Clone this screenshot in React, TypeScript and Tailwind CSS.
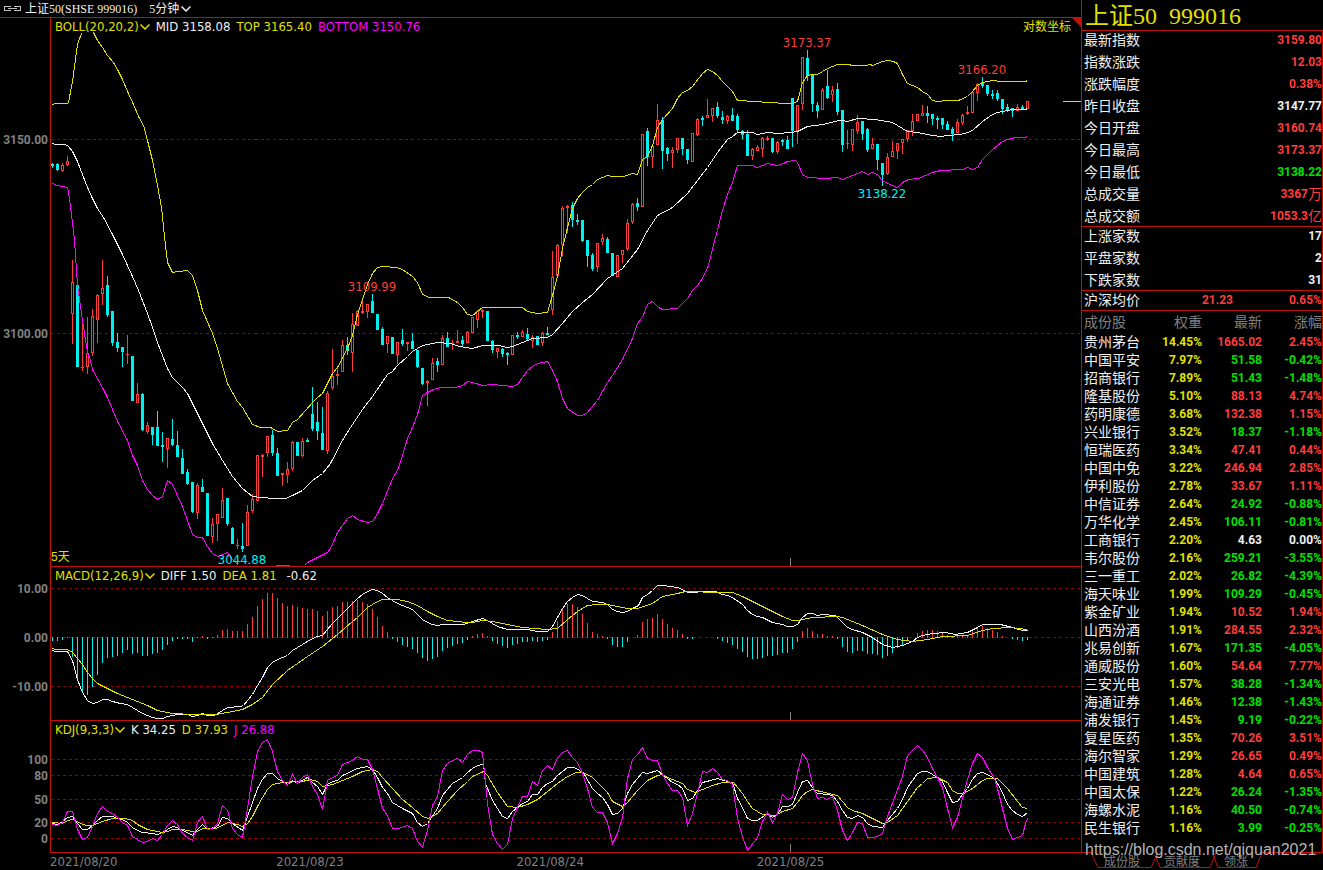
import type { ReactNode } from "react";

type Point = { label: string; y: number };

// u = up, d = down, then high, body top, body bottom, low
const candles = `
d163,164,166,168 d163,164,170,171 u163,165,171,172 u156,161,165,166 u260,282,314,344 d285,285,367,367 u318,367,368,371 u317,353,367,374
u309,316,353,356 u294,295,320,343 u260,288,294,305 d276,285,315,317 d311,311,343,346 d333,342,348,352 d347,347,352,367 u335,354,355,364
d356,356,401,401 u383,394,403,403 d393,394,430,431 u422,425,432,434 d427,427,435,445 d411,427,446,446 d432,445,447,462 u438,438,449,468
d419,439,445,446 d431,445,457,457 d449,458,474,474 d469,472,484,485 d482,482,512,513 u483,485,513,519 d479,487,492,492 d493,493,536,536
u518,524,537,543 u514,514,524,541 u488,500,518,518 d498,498,524,526 d527,528,544,544 u539,545,546,549 d523,546,549,552 u505,512,546,546
u494,499,511,513 u455,455,501,501 u454,455,457,477 u436,436,453,457 d430,435,453,456 d448,453,476,476 u473,473,475,486 u462,469,475,483
u441,442,469,471 d442,442,456,456 u438,441,456,457 d438,440,442,442 d387,414,429,431 d402,422,431,440 d407,433,450,450 u391,393,451,454
u349,376,388,390 u368,374,376,385 u340,345,372,372 d337,345,351,355 u313,324,353,372 u310,311,326,326 u299,311,313,314 u304,304,312,318
d294,301,313,313 d314,314,330,330 d327,329,345,345 u336,336,344,353 d337,337,354,354 u342,342,355,364 d329,340,344,346 u342,342,344,351
d333,341,349,349 d350,350,367,368 d368,368,384,385 u380,381,383,406 u358,363,380,380 d358,361,365,372 u335,338,365,365 d332,338,347,347
u340,343,344,350 u330,341,343,343 d336,340,344,346 u331,332,343,343 u317,317,333,333 u310,311,320,328 u309,310,312,318 d311,311,341,341
d340,341,350,353 u348,348,352,358 d348,349,354,357 d352,353,355,365 u335,335,355,355 d332,335,337,339 u330,332,337,337 d328,334,339,341
u335,337,341,348 d336,336,345,345 u332,333,343,346 d327,333,335,335 u251,277,310,315 u244,245,276,276 u206,208,245,256 u205,206,208,233
d202,205,220,227 d214,220,222,225 d220,220,241,242 d240,240,256,267 d253,255,269,271 u243,243,267,272 u234,238,242,245 d237,239,253,253
d253,253,276,276 u255,255,277,277 u250,250,255,263 u219,223,249,251 u203,204,222,224 d198,203,207,211 u134,134,207,207 d128,131,157,166
u145,146,157,168 u104,120,145,145 d117,120,151,169 d147,148,154,161 u147,150,153,168 u138,138,150,153 d138,138,149,155 d149,149,160,164
u133,133,162,162 u118,119,135,136 d116,118,120,126 u99,115,118,118 u108,108,116,122 d102,107,116,118 d111,117,120,124 u115,116,121,124
d108,115,121,121 d114,116,130,132 d130,131,135,139 d130,134,156,156 u148,149,156,160 u145,147,151,151 u137,138,149,157 u136,138,140,141
d138,138,152,153 u141,142,152,154 d139,140,142,146 d136,140,149,149 d98,98,131,147 u105,105,131,144 u57,57,104,110 d50,58,76,81
d75,75,104,112 d102,105,111,118 u88,90,110,110 d70,86,98,99 u86,90,95,102 d83,89,112,115 d110,110,145,152 u130,143,144,149
u129,129,145,151 u115,122,131,134 d121,121,134,140 d128,129,150,152 u138,144,149,149 d144,144,160,170 d163,163,175,186 u153,157,174,175
u141,151,157,157 u143,143,151,159 u139,139,143,154 u130,130,139,142 u114,121,131,136 u114,114,121,121 u105,113,116,116 d106,113,116,123
d114,114,119,125 d116,118,120,129 d118,118,125,129 d121,124,130,130 d127,129,134,141 u119,122,133,133 u114,115,123,125 u106,112,114,115
u91,92,113,113 u83,84,93,101 d77,82,86,88 d85,85,94,96 d90,94,96,99 d90,93,99,101 d99,99,109,114 d104,107,110,112
d108,108,111,117 u104,107,111,111 d105,107,110,110 u101,101,109,109`
  .trim()
  .split(/\s+/)
  .map((c) => {
    const [high, top, bottom, low] = c.slice(1).split(",").map(Number);
    return { up: c[0] === "u", high, top, bottom, low };
  });

// histogram bars, pixels above (+) or below (-) the zero line
const macdBars = [
  -4, -4, -3, -1, -20, -43, -56, -58, -50, -38, -26, -21, -20, -19, -16, -13, -17, -16, -19, -19,
  -17, -16, -13, -8, -4, -2, -2, -2, -5, -1, 1, -2, -1, 2, 7, 8, 6, 6, 6, 13,
  20, 31, 38, 44, 44, 39, 34, 31, 32, 30, 29, 28, 28, 26, 21, 26, 30, 31, 35, 35,
  36, 37, 35, 33, 28, 20, 11, 5, -2, -5, -8, -10, -12, -16, -21, -24, -22, -20, -14, -11,
  -9, -7, -6, -3, 1, 3, 4, 1, -4, -7, -9, -11, -8, -7, -5, -5, -4, -5, -4, -3,
  5, 16, 28, 33, 33, 30, 23, 14, 5, 3, 1, -2, -8, -10, -10, -5, 0, 2, 15, 18,
  19, 23, 18, 13, 9, 7, 3, -2, -2, 0, 0, 0, 0, -2, -4, -6, -8, -12, -15, -20,
  -22, -22, -21, -19, -19, -18, -16, -16, -12, -5, 6, 9, 6, 3, 3, 1, 1, -2, -10, -15,
  -16, -14, -14, -17, -17, -18, -21, -19, -16, -11, -8, -3, 0, 4, 6, 7, 7, 6, 4, 2,
  1, 1, 1, 2, 7, 9, 11, 9, 7, 5, 1, 0, -2, -3, -4, -3,
];

const bollTop = [
  "52,104 55,103 67,103 68,102 72,81 77,44 81,33",
  "93,32 97,40 102,47 107,55 113,62 117,69 122,79 127,91 133,104 138,116 143,125 147,140 152,160 157,185 161,207 164,236 167,262 172,272 178,271 187,270 192,275 197,290 202,310 212,333 217,348 227,383 237,401 242,407 252,424 260,427 270,427 277,431 287,430 292,422 297,419 312,402 317,397 322,393 332,373 337,367 347,348 352,335 357,314 362,299 367,284 372,273 377,267 382,266 396,267 402,269 412,276 417,282 422,294 429,297 448,297 457,302 462,307 467,314 472,315 482,307 498,307 508,307 522,307 527,311 537,313 547,312 552,295 557,276 562,248 567,227 572,208 577,198 582,192 587,187 592,184 597,179 602,177 607,175 612,176 623,176 632,173 637,174 642,159 647,156 652,145 657,127 662,119 672,108 677,98 682,92 687,90 692,86 702,73 707,69 712,71 717,75 722,81 727,86 732,91 737,100 755,101 767,102 787,103 792,103 797,101 802,82 807,75 812,74 817,74 822,71 827,68 837,64 847,64 853,65 865,65 870,64 872,65 882,61 887,60 893,61 897,63 902,74 907,83 912,85 917,87 922,91 927,94 932,100 937,101 947,100 958,100 967,96 972,91 977,85 982,82 992,80 1000,81 1025,81 1027,80",
];
const bollMid =
  "52,143 55,144 65,144 68,146 72,151 77,161 82,174 87,187 92,198 97,208 103,217 112,234 122,254 132,276 138,290 147,313 152,327 157,342 162,355 167,368 172,377 182,387 187,393 192,403 202,423 212,443 222,460 232,476 242,488 252,496 260,497 274,498 285,498 292,495 302,490 312,480 322,473 330,463 343,438 352,424 362,409 372,396 387,374 392,371 397,365 407,356 412,351 422,345 437,342 450,343 459,346 472,348 482,345 498,345 507,347 512,346 522,342 532,338 547,337 552,334 562,323 572,311 582,302 592,294 607,278 622,268 637,249 647,230 657,215 672,207 687,193 707,167 717,152 727,139 732,136 737,132 752,132 757,134 767,132 777,133 790,132 797,131 807,126 823,124 838,120 842,120 847,121 857,118 875,119 880,120 892,122 897,125 907,131 917,132 932,135 940,136 947,135 960,134 967,132 972,130 982,121 992,114 997,112 1007,110 1013,109 1025,109 1027,108";
const bollBottom = [
  "52,183 57,185 67,187 69,198 72,222 74,240 77,285 82,320 87,352 90,360 92,369 102,387 107,397 117,421 127,440 132,455 137,465 142,480 147,489 152,495 157,499 162,496 167,480 172,484 182,506 192,534 197,537 202,537 207,546 212,553 217,556 222,554 227,552 232,559 238,565",
  "275,565 289,565",
  "304,565 307,562 317,557 327,552 330,548 337,532 347,518 352,515 357,519 367,522 372,521 377,513 382,503 392,478 397,470 402,455 407,438 412,427 417,414 422,395 427,392 433,389 440,387 455,387 462,385 467,381 472,382 482,385 492,384 512,386 517,384 527,370 532,366 537,363 547,361 552,370 557,381 562,398 567,408 577,415 582,415 587,412 597,400 607,382 612,375 622,359 632,338 637,323 642,317 647,304 652,301 658,307 662,309 677,308 687,298 692,290 697,285 702,278 708,265 712,248 717,230 722,210 727,194 732,182 737,165 752,165 757,167 767,163 777,165 783,163 787,161 795,160 797,162 802,174 807,177 825,178 837,177 842,179 852,175 862,171 867,174 872,172 877,174 882,180 887,183 897,187 902,182 908,179 918,178 932,172 940,170 962,169 967,167 972,169 977,167 982,159 992,149 1002,141 1007,139 1015,137 1024,137 1027,136",
];
const diffLine =
  "52,650 55,651 67,651 72,660 77,679 82,692 87,700 92,703 97,702 102,699 107,699 112,701 120,703 127,704 132,707 137,710 142,713 147,715 152,717 157,718 162,718 167,716 177,714 187,714 192,716 197,715 202,713 207,715 214,715 222,710 227,707 240,706 243,705 247,700 252,694 257,685 262,677 267,667 272,662 277,659 287,655 292,650 302,644 312,638 317,636 322,635 332,623 337,618 347,608 352,603 357,598 362,594 367,591 372,589 377,590 382,593 387,597 397,603 407,607 412,609 417,614 422,619 427,622 432,624 437,625 443,624 463,624 472,621 482,618 487,620 497,626 507,629 527,629 537,631 547,631 552,626 557,617 562,608 567,601 572,597 577,594 582,595 587,598 592,601 602,602 607,604 612,609 617,611 622,612 627,611 632,608 638,605 642,597 647,594 652,590 657,585 662,585 670,586 677,587 682,589 687,592 695,592 700,591 715,591 722,594 727,595 732,597 742,604 747,610 752,614 757,616 762,617 772,622 782,624 787,626 792,626 797,624 802,617 807,613 812,613 817,615 822,614 835,615 842,622 847,627 852,629 862,632 872,637 882,644 892,647 902,645 912,641 917,637 922,635 932,633 945,632 955,634 967,632 977,627 982,624 1000,624 1012,627 1022,630 1027,630";
const deaLine =
  "52,648 55,649 67,649 72,652 77,658 82,664 87,672 92,678 97,683 107,688 117,693 132,699 147,705 157,710 172,713 192,714 215,714 227,712 242,709 252,704 262,697 272,684 287,670 307,656 322,646 337,634 352,621 357,617 362,612 367,607 377,601 382,599 397,599 407,601 417,605 427,611 437,616 447,620 457,621 465,622 472,622 482,620 492,621 507,624 522,627 547,629 557,628 567,619 577,611 587,605 597,604 607,604 617,606 627,608 637,608 652,603 662,596 677,593 685,591 720,592 732,592 742,596 762,606 782,616 792,620 797,620 812,617 837,616 842,617 862,625 882,634 897,639 912,641 927,639 942,636 967,635 982,630 992,628 1010,627 1027,629";
const kLine =
  "52,823 57,824 62,821 67,817 72,816 77,823 82,829 87,829 92,825 97,820 102,816 112,816 117,818 122,819 127,822 132,827 137,830 142,832 152,833 157,834 162,832 167,829 172,826 177,827 182,830 187,832 192,835 197,829 202,824 207,829 217,826 222,817 227,818 232,823 242,830 247,816 252,802 257,788 262,779 267,773 272,773 277,778 287,784 292,780 297,783 307,777 312,782 317,786 322,794 327,784 332,781 337,780 342,775 357,768 367,766 372,769 377,777 382,787 387,793 392,802 402,808 412,813 417,822 422,826 427,823 431,817 437,808 442,795 447,789 452,783 462,777 467,772 472,768 477,765 483,764 485,783 492,800 497,808 502,816 507,818 512,811 517,807 522,803 527,801 532,794 537,794 542,787 547,783 552,781 557,775 567,767 574,767 579,770 584,774 592,788 597,793 602,797 607,804 612,814 617,813 622,808 627,793 632,784 637,778 642,772 647,773 657,770 662,774 672,782 677,784 682,788 687,800 692,798 697,790 702,782 710,780 717,778 727,781 732,782 737,798 742,807 747,818 752,820 757,820 767,813 772,817 777,814 782,806 787,806 792,804 797,792 802,781 807,780 812,787 817,793 827,794 832,795 837,801 842,810 847,817 852,818 857,815 862,817 867,823 872,826 882,827 887,820 897,808 902,799 907,787 917,773 922,771 927,771 937,777 942,781 947,792 952,802 957,801 962,794 967,788 972,779 977,773 982,772 987,774 994,778 1001,790 1007,804 1012,810 1017,814 1022,816 1027,812";
const dLine =
  "52,822 62,823 67,820 72,819 77,821 82,824 87,825 92,825 102,821 112,818 125,818 132,820 137,824 147,829 157,831 162,832 167,831 172,829 182,829 192,831 197,831 202,828 215,828 222,825 227,822 237,824 242,826 247,823 252,816 257,806 262,797 267,789 272,784 282,782 302,781 310,779 317,781 322,786 332,784 342,780 352,776 362,771 372,769 377,771 382,777 392,788 402,799 412,807 422,816 428,818 437,813 447,801 457,790 467,781 472,776 483,771 487,775 497,792 507,806 517,807 527,804 537,799 547,791 557,783 567,776 576,772 582,772 587,774 592,777 607,792 612,801 622,806 627,802 637,790 647,780 657,775 662,774 667,777 682,783 687,789 695,792 702,789 712,785 722,782 733,782 737,787 742,793 747,801 752,808 757,811 762,814 775,815 782,811 792,808 797,802 802,795 807,791 812,789 820,791 837,795 847,807 852,810 862,813 882,823 887,822 897,815 907,801 917,787 922,783 927,778 937,777 947,782 952,790 957,793 963,793 972,788 982,780 987,778 997,778 1007,788 1017,801 1022,807 1027,808";
const jLine =
  "52,824 57,825 62,822 67,811 72,811 77,829 82,839 87,837 92,826 97,813 102,806 107,811 112,813 117,817 122,822 127,825 132,836 137,839 142,842 147,841 152,838 157,840 162,834 167,825 172,820 177,824 182,833 187,837 192,840 197,822 202,816 207,829 212,828 217,823 222,805 227,810 232,828 237,834 242,837 247,808 252,776 257,751 262,742 267,739 272,751 277,771 282,780 287,785 292,774 297,783 302,777 307,774 312,786 317,794 322,809 327,780 332,777 337,775 342,764 347,762 352,760 357,756 362,759 367,759 372,769 377,788 382,808 387,815 392,828 398,828 407,825 412,828 417,841 422,847 427,830 432,805 437,796 442,770 447,763 452,760 457,758 462,762 467,754 472,750 478,750 482,752 487,803 492,834 497,843 502,849 507,844 512,818 517,807 522,796 527,796 532,781 537,785 542,770 547,765 552,769 557,757 562,752 567,750 572,757 577,762 582,773 587,788 592,807 597,812 602,812 607,822 612,843 617,833 622,817 627,778 632,759 637,754 642,747 647,758 652,760 657,760 662,774 667,783 672,790 677,790 682,797 687,825 692,813 697,793 702,771 707,772 712,768 717,772 722,779 727,780 732,784 737,818 742,836 747,850 757,837 762,821 767,812 772,822 777,813 782,794 787,799 792,797 797,772 802,753 807,760 812,784 817,798 822,797 827,799 832,796 837,810 842,830 847,840 852,832 857,822 862,823 867,837 872,837 877,836 882,833 887,816 902,776 907,755 917,745 922,750 927,757 932,768 937,777 942,787 947,808 952,827 957,817 967,779 972,763 977,753 982,757 987,767 994,778 997,788 1002,808 1007,828 1012,839 1017,837 1022,835 1025,823 1027,818";

const WHITE = "#f0f0f0";
const YELLOW = "#e1e100";
const MAGENTA = "#ff00ff";
const RED = "#ff3c3c";
const CYAN = "#00f0f0";

const red = "text-[#ff3c3c]";
const green = "text-[#00e000]";
const white = "text-[#f0f0f0]";

const quotes = [
  { label: "最新指数", value: "3159.80", color: red },
  { label: "指数涨跌", value: "12.03", color: red },
  { label: "涨跌幅度", value: "0.38%", color: red },
  { label: "昨日收盘", value: "3147.77", color: white },
  { label: "今日开盘", value: "3160.74", color: red },
  { label: "今日最高", value: "3173.37", color: red },
  { label: "今日最低", value: "3138.22", color: green },
  { label: "总成交量", value: "3367", unit: "万", color: red },
  { label: "总成交额", value: "1053.3", unit: "亿", color: red },
];

const breadth = [
  { label: "上涨家数", value: "17", color: white },
  { label: "平盘家数", value: "2", color: white },
  { label: "下跌家数", value: "31", color: white },
];

const stocks = [
  ["贵州茅台", "14.45%", "1665.02", "2.45%"],
  ["中国平安", "7.97%", "51.58", "-0.42%"],
  ["招商银行", "7.89%", "51.43", "-1.48%"],
  ["隆基股份", "5.10%", "88.13", "4.74%"],
  ["药明康德", "3.68%", "132.38", "1.15%"],
  ["兴业银行", "3.52%", "18.37", "-1.18%"],
  ["恒瑞医药", "3.34%", "47.41", "0.44%"],
  ["中国中免", "3.22%", "246.94", "2.85%"],
  ["伊利股份", "2.78%", "33.67", "1.11%"],
  ["中信证券", "2.64%", "24.92", "-0.88%"],
  ["万华化学", "2.45%", "106.11", "-0.81%"],
  ["工商银行", "2.20%", "4.63", "0.00%"],
  ["韦尔股份", "2.16%", "259.21", "-3.55%"],
  ["三一重工", "2.02%", "26.82", "-4.39%"],
  ["海天味业", "1.99%", "109.29", "-0.45%"],
  ["紫金矿业", "1.94%", "10.52", "1.94%"],
  ["山西汾酒", "1.91%", "284.55", "2.32%"],
  ["兆易创新", "1.67%", "171.35", "-4.05%"],
  ["通威股份", "1.60%", "54.64", "7.77%"],
  ["三安光电", "1.57%", "38.28", "-1.34%"],
  ["海通证券", "1.46%", "12.38", "-1.43%"],
  ["浦发银行", "1.45%", "9.19", "-0.22%"],
  ["复星医药", "1.35%", "70.26", "3.51%"],
  ["海尔智家", "1.29%", "26.65", "0.49%"],
  ["中国建筑", "1.28%", "4.64", "0.65%"],
  ["中国太保", "1.22%", "26.24", "-1.35%"],
  ["海螺水泥", "1.16%", "40.50", "-0.74%"],
  ["民生银行", "1.16%", "3.99", "-0.25%"],
];

const changeColor = (change: string) => {
  if (change === "0.00%") return white;
  return change.startsWith("-") ? green : red;
};

const Chevron = () => (
  <svg width="10" height="6" viewBox="0 0 10 6" fill="none" stroke="currentColor" strokeWidth="1.5">
    <path d="M0.5 0.5L5 5L9.5 0.5" />
  </svg>
);

const Line = ({ points, color }: { points: string; color: string }) => (
  <polyline points={points} fill="none" stroke={color} />
);

type PaneProps = {
  top: number;
  height: number;
  axis: Point[];
  legend: ReactNode;
  overlay?: ReactNode;
  children: ReactNode;
  first?: boolean;
};

// one chart pane: value axis on the left, plot on the right
const Pane = ({ top, height, axis, legend, overlay, children, first }: PaneProps) => (
  <section className="flex min-h-0">
    <div className={`relative w-[50px] shrink-0 border-t ${first ? "border-[#c01008]" : "border-transparent"}`}>
      {axis.map(({ label, y }) => (
        <span
          key={label}
          className="absolute right-0.5 -translate-y-1/2 font-['Roboto',sans-serif] text-xs leading-4 font-bold text-[#808080]"
          style={{ top: `${((y + 1 - top) / height) * 100}%` }}
        >
          {label}
        </span>
      ))}
    </div>
    <div className="relative min-w-0 flex-1 border-t border-l border-[#c01008]">
      <svg
        className="absolute inset-0 h-full w-full"
        viewBox={`51 ${top} 1030 ${height}`}
        preserveAspectRatio="none"
        shapeRendering="crispEdges"
      >
        <g transform="translate(0.5 0.5)">
          {axis.map(({ y }) => (
            <line key={y} x1="50" x2="1080" y1={y} y2={y} stroke="#960000" strokeDasharray="3 3" />
          ))}
          <line x1="790" x2="790" y1={top + height - 9} y2={top + height} stroke="#808080" />
          {children}
        </g>
      </svg>
      <div className="absolute top-0 left-1 flex items-center gap-1.5 font-['DejaVu_Sans_Condensed','Noto_Sans',sans-serif] text-[13px] leading-[18px] whitespace-nowrap">
        {legend}
      </div>
      {overlay}
    </div>
  </section>
);

const IndicatorButton = ({ children }: { children: string }) => (
  <button type="button" className="flex items-center gap-px text-[#e1e100]">
    {children}
    <Chevron />
  </button>
);

const PriceTag = ({ x, y, color, children }: { x: number; y: number; color: string; children: string }) => (
  <span
    className={`absolute -translate-x-1/2 -translate-y-1/2 font-['DejaVu_Sans_Condensed','Noto_Sans',sans-serif] text-[13px] leading-4 ${color}`}
    style={{ left: `${((x - 51) / 1030) * 100}%`, top: `${((y - 18) / 548) * 100}%` }}
  >
    {children}
  </span>
);

const QuoteRow = ({ label, value, unit, color }: { label: string; value: string; unit?: string; color: string }) => (
  <div className="flex h-[18px] items-center justify-between">
    <dt className="pl-0.5 text-sm leading-[18px]">{label}</dt>
    <dd className={`flex items-center font-['Roboto','Noto_Sans_CJK_SC',sans-serif] text-xs font-bold ${color}`}>
      {value}
      {unit && <span className="text-sm leading-[18px] font-normal">{unit}</span>}
    </dd>
  </div>
);

const Sidebar = () => (
  <aside className="flex w-[242px] shrink-0 flex-col">
    <h1 className="flex h-[30px] items-center border-l border-[#c01008] pt-0.5 pl-[3px] font-['Liberation_Serif','Noto_Sans_CJK_SC',serif] text-2xl leading-7 text-[#e1e100]">
      上证50<span className="ml-3">999016</span>
    </h1>
    <div className="flex flex-1 flex-col border-r border-l border-[#c01008]">
      <dl className="flex flex-col gap-1 border-t border-[#c01008] pb-px">
        {quotes.map((q) => (
          <QuoteRow key={q.label} {...q} />
        ))}
      </dl>
      <dl className="flex flex-col gap-1 border-t border-[#c01008] pb-px">
        {breadth.map((q) => (
          <QuoteRow key={q.label} {...q} />
        ))}
      </dl>
      <div className="flex items-center border-t border-b border-[#c01008] pb-px font-['Roboto','Noto_Sans_CJK_SC',sans-serif] text-xs leading-[18px] font-bold text-[#ff3c3c]">
        <span className="pl-0.5 text-sm leading-[18px] font-normal text-[#f0f0f0]">沪深均价</span>
        <span className="flex-1 text-right">21.23</span>
        <span className="w-[89px] text-right">0.65%</span>
      </div>
      <table className="w-full table-fixed text-right font-['Roboto','Noto_Sans_CJK_SC',sans-serif] text-xs leading-[18px] font-bold">
        <thead>
          <tr className="h-[22px] text-sm leading-[18px] text-[#808080]">
            <th className="w-1/4 p-0 pl-0.5 text-left font-normal">成份股</th>
            <th className="w-1/4 p-0 font-normal">权重</th>
            <th className="w-1/4 p-0 font-normal">最新</th>
            <th className="w-1/4 p-0 font-normal">涨幅</th>
          </tr>
        </thead>
        <tbody>
          {stocks.map(([name, weight, price, change]) => (
            <tr key={name} className="h-[18px]">
              <td className="p-0 pl-0.5 text-left text-sm leading-[18px] font-normal whitespace-nowrap">{name}</td>
              <td className="p-0 text-[#e1e100]">{weight}</td>
              <td className={`p-0 ${changeColor(change)}`}>{price}</td>
              <td className={`p-0 ${changeColor(change)}`}>{change}</td>
            </tr>
          ))}
        </tbody>
      </table>
    </div>
    <nav className="relative flex h-[18px] pt-px pl-[23px] text-xs leading-4 text-[#808080]">
      <svg className="absolute top-0 left-0" width="242" height="18" fill="none" stroke="#c01008">
        <path d="M0 0.5H10L17 15.5H70L77 0.5M74 3L79 15.5H129L135 0.5M132 3L137 15.5H175L181 0.5H242" />
      </svg>
      <button type="button">成份股</button>
      <button type="button" className="ml-6">贡献度</button>
      <button type="button" className="ml-6">领涨</button>
      <a
        href="https://blog.csdn.net/qiquan2021"
        className="absolute -top-3 left-1 text-base leading-5 text-[#b4b4b4]"
      >
        https://blog.csdn.net/qiquan2021
      </a>
    </nav>
  </aside>
);

const App = () => {
  return (
    <div className="flex min-h-screen bg-black font-['Liberation_Sans','Noto_Sans_CJK_SC',sans-serif] text-[#f0f0f0]">
      <main className="flex min-w-0 flex-1 flex-col">
        <header className="flex h-[17px] items-center pl-1 font-['Liberation_Serif','Noto_Sans_CJK_SC',serif] text-xs leading-4">
          <svg width="17" height="5" viewBox="0 0 17 5" fill="none" stroke="#c0c0c0" shapeRendering="crispEdges">
            <path d="M6.5 1V0.5H0.5V4.5H6.5V4M10.5 1V0.5H16.5V4.5H10.5V4M4 2.5H13" />
          </svg>
          <span className="ml-1">上证50(SHSE 999016)</span>
          <button type="button" className="ml-3 flex items-center gap-0.5">
            5分钟
            <Chevron />
          </button>
        </header>

        <div className="grid flex-1 grid-rows-[549fr_154fr_132fr]">
          <Pane
            first
            top={18}
            height={548}
            axis={[
              { label: "3150.00", y: 139 },
              { label: "3100.00", y: 333 },
            ]}
            legend={
              <>
                <IndicatorButton>BOLL(20,20,2)</IndicatorButton>
                <span>MID 3158.08</span>
                <span className="text-[#e1e100]">TOP 3165.40</span>
                <span className="text-[#ff00ff]">BOTTOM 3150.76</span>
              </>
            }
            overlay={
              <>
                <PriceTag x={807} y={43} color={red}>3173.37</PriceTag>
                <PriceTag x={982} y={70} color={red}>3166.20</PriceTag>
                <PriceTag x={372} y={287} color={red}>3109.99</PriceTag>
                <PriceTag x={882} y={194} color="text-[#00f0f0]">3138.22</PriceTag>
                <PriceTag x={242} y={560} color="text-[#00f0f0]">3044.88</PriceTag>
                <button type="button" className="absolute top-0 right-2.5 text-xs leading-[18px] text-[#e1e100]">
                  对数坐标
                </button>
                <span className="absolute bottom-0 left-0 text-xs leading-[18px] text-[#e1e100]">5天</span>
                <svg className="absolute top-0 right-0" width="9" height="9">
                  <path d="M0 0H9V9Z" fill="#c01008" />
                </svg>
              </>
            }
          >
            {candles.map(({ up, high, top, bottom, low }, i) => {
              const x = 52 + i * 5;
              const color = up ? RED : CYAN;
              return (
                <g key={i} stroke={color} fill={up ? "#000" : color}>
                  <line x1={x} x2={x} y1={high - 0.5} y2={low - 0.5} />
                  <rect x={x - 1} y={top} width="2" height={Math.max(bottom - top - 1, 0.1)} />
                </g>
              );
            })}
            {bollTop.map((p) => (
              <Line key={p} points={p} color={YELLOW} />
            ))}
            <Line points={bollMid} color={WHITE} />
            {bollBottom.map((p) => (
              <Line key={p} points={p} color={MAGENTA} />
            ))}
            <line x1="1062" x2="1081" y1="101" y2="101" stroke={YELLOW} />
          </Pane>

          <Pane
            top={567}
            height={153}
            axis={[
              { label: "10.00", y: 588 },
              { label: "0.00", y: 637 },
              { label: "-10.00", y: 686 },
            ]}
            legend={
              <>
                <IndicatorButton>MACD(12,26,9)</IndicatorButton>
                <span>DIFF 1.50</span>
                <span className="text-[#e1e100]">DEA 1.81</span>
                <span className="ml-1">-0.62</span>
              </>
            }
          >
            {macdBars.map((v, i) =>
              v === 0 ? null : (
                <line
                  key={i}
                  x1={52 + i * 5}
                  x2={52 + i * 5}
                  y1={v > 0 ? 637.5 : 636.5}
                  y2={636.5 - v}
                  stroke={v > 0 ? RED : CYAN}
                />
              )
            )}
            <Line points={diffLine} color={WHITE} />
            <Line points={deaLine} color={YELLOW} />
          </Pane>

          <Pane
            top={721}
            height={131}
            axis={[
              { label: "100", y: 759 },
              { label: "80", y: 775 },
              { label: "50", y: 799 },
              { label: "20", y: 822 },
              { label: "0", y: 838 },
            ]}
            legend={
              <>
                <IndicatorButton>KDJ(9,3,3)</IndicatorButton>
                <span>K 34.25</span>
                <span className="text-[#e1e100]">D 37.93</span>
                <span className="text-[#ff00ff]">J 26.88</span>
              </>
            }
          >
            <Line points={kLine} color={WHITE} />
            <Line points={dLine} color={YELLOW} />
            <Line points={jLine} color={MAGENTA} />
          </Pane>
        </div>

        <footer className="ml-[50px] grid h-[18px] grid-cols-[226fr_240fr_240fr_324fr] border-t border-[#c01008] font-['DejaVu_Sans_Condensed','Noto_Sans',sans-serif] text-[13px] leading-[18px] text-[#808080]">
          <span>2021/08/20</span>
          <span>2021/08/23</span>
          <span>2021/08/24</span>
          <span>2021/08/25</span>
        </footer>
      </main>
      <Sidebar />
    </div>
  );
};

export default App;
